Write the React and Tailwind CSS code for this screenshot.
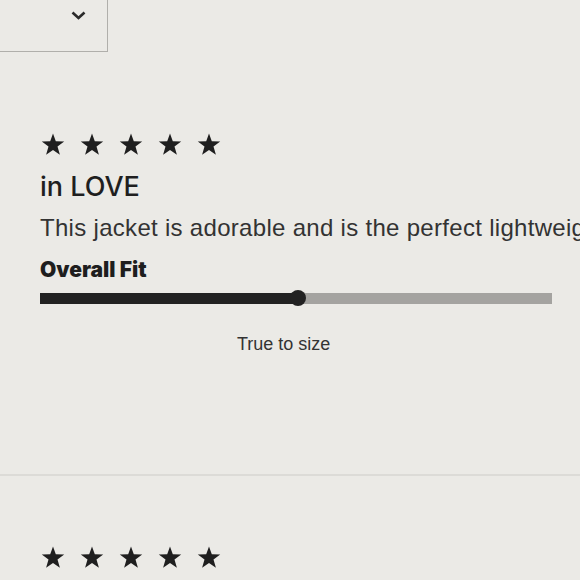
import React from "react";

function Star() {
  return (
    <svg width="24" height="23" viewBox="0 0 24 23" className="block">
      <polygon
        points="12,0.5 14.8,8.3 23.2,8.5 16.5,13.6 18.9,21.8 12,17 5.1,21.8 7.5,13.6 0.8,8.5 9.2,8.3"
        fill="#1f1f1f"
      />
    </svg>
  );
}

function Stars() {
  return (
    <div className="flex gap-[15px]">
      <Star />
      <Star />
      <Star />
      <Star />
      <Star />
    </div>
  );
}

export default function App() {
  return (
    <div
      className="w-[580px] h-[580px] overflow-hidden bg-[#ebeae6] text-[#2a2a2a]"
      style={{ fontFamily: '"Liberation Sans", Arial, sans-serif' }}
    >
      <div className="w-[108px] h-[52px] border-r border-b border-[#b0afab] flex justify-end items-start pt-[11px] pr-[21px]">
        <svg width="15" height="9" viewBox="0 0 15 9">
          <polyline points="1.5,1.5 7.5,7 13.5,1.5" fill="none" stroke="#2a2a2a" strokeWidth="2.6" />
        </svg>
      </div>

      <div className="pl-[41px] pt-[81px]">
        <Stars />
      </div>
      <div
        className="pl-[40px] mt-[14px] text-[27px] leading-[33px] font-medium text-[#1f1f1f]"
        style={{ fontFamily: 'Inter, "Liberation Sans", sans-serif' }}
      >
        in LOVE
      </div>
      <div className="pl-[40px] pr-0 mt-[11px] w-[580px] overflow-hidden text-[24px] leading-[28px] tracking-[0.3px] whitespace-nowrap text-[#333]">
        This jacket is adorable and is the perfect lightweight
      </div>
      <div
        className="pl-[40px] mt-[15px] text-[21px] leading-[25px] font-black text-[#1e1e1e]"
        style={{ fontFamily: 'Inter, "Liberation Sans", sans-serif' }}
      >
        Overall Fit
      </div>
      <div className="ml-[40px] w-[512px] mt-[8px] relative h-[16px] flex items-center">
        <div className="h-[11px] w-[257px] bg-[#222]" />
        <div className="h-[11px] flex-1 bg-[#a4a3a0]" />
        <div className="absolute left-[250px] top-0 w-[16px] h-[16px] rounded-full bg-[#222]" />
      </div>
      <div className="pl-[237px] mt-[27px] text-[18px] leading-[22px] text-[#333]">True to size</div>

      <div className="mt-[119px] h-[2px] bg-[#dcdbd7]" />

      <div className="pl-[41px] mt-[70px]">
        <Stars />
      </div>
    </div>
  );
}
